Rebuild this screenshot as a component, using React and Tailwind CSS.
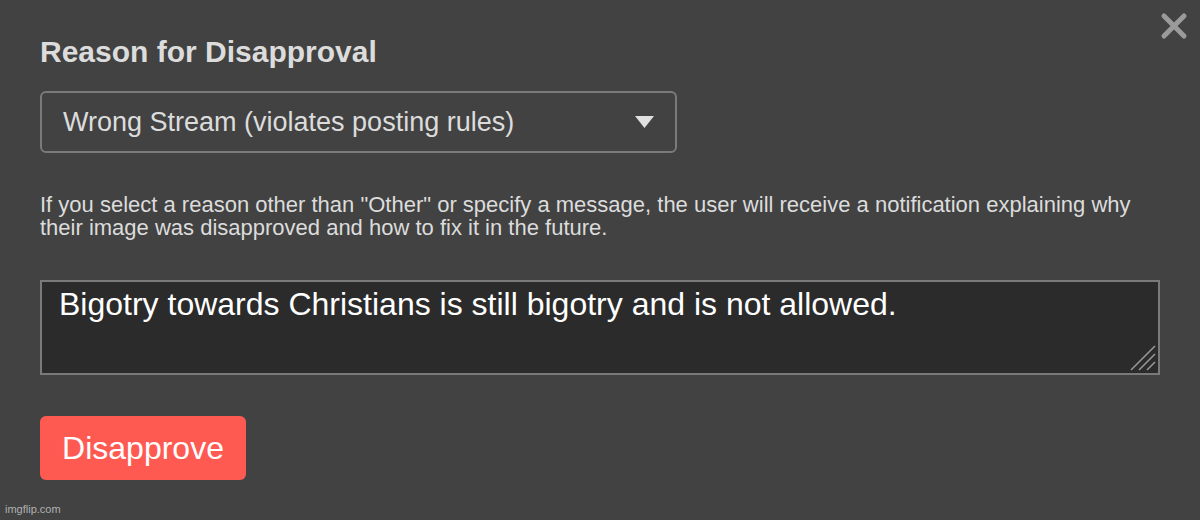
import React from "react";

const DisapproveModal = () => {
    return (
        <div className="relative w-[1200px] h-[520px] bg-[#424242] font-['Liberation_Sans',Arial,sans-serif] overflow-hidden">
            {/* Close button */}
            <button className="absolute right-[12px] top-[12px] w-[28px] h-[28px]">
                <svg viewBox="0 0 28 28" className="w-full h-full">
                    <path d="M4 4 L24 24 M24 4 L4 24" stroke="#9a9a9a" strokeWidth="5" strokeLinecap="round" />
                </svg>
            </button>

            <div className="pl-[40px] pr-[40px] pt-[34px] flex flex-col">
                <h2 className="text-[30px] font-bold text-[#dcdcdc] leading-[36px]">Reason for Disapproval</h2>

                {/* Select */}
                <div className="mt-[21px] w-[637px] h-[62px] border-2 border-[#7a7a7a] rounded-[6px] flex items-center justify-between pl-[21px] pr-[20px]">
                    <span className="text-[27px] text-[#dcdcdc]">Wrong Stream (violates posting rules)</span>
                    <svg width="20" height="14" viewBox="0 0 20 14">
                        <path d="M0 1 L19 1 L9.5 13 Z" fill="#e0e0e0" />
                    </svg>
                </div>

                <p className="mt-[40px] text-[22px] leading-[23px] text-[#dcdcdc] w-[1110px]">
                    If you select a reason other than "Other" or specify a message, the user will receive a notification explaining why their image was disapproved and how to fix it in the future.
                </p>

                {/* Message */}
                <div className="relative mt-[41px] w-[1120px] h-[95px] bg-[#2b2b2b] border-2 border-[#7a7a7a] pl-[17px] pt-[3px]">
                    <span className="text-[32px] text-white leading-[38px]">
                        Bigotry towards Christians is still bigotry and is not allowed.
                    </span>
                    <svg className="absolute right-[2px] bottom-[2px]" width="26" height="26" viewBox="0 0 26 26">
                        <path d="M25 1 L1 25 M25 9 L9 25 M25 17 L17 25" stroke="#9a9a9a" strokeWidth="1.5" />
                    </svg>
                </div>

                <button className="mt-[41px] self-start w-[206px] h-[64px] bg-[#ff5a52] rounded-[6px] text-white text-[32px]">
                    Disapprove
                </button>
            </div>

            <span className="absolute left-[5px] bottom-[3px] text-[11px] text-[#b0b0b0]">imgflip.com</span>
        </div>
    );
};

export default function App() {
    return <DisapproveModal />;
}
